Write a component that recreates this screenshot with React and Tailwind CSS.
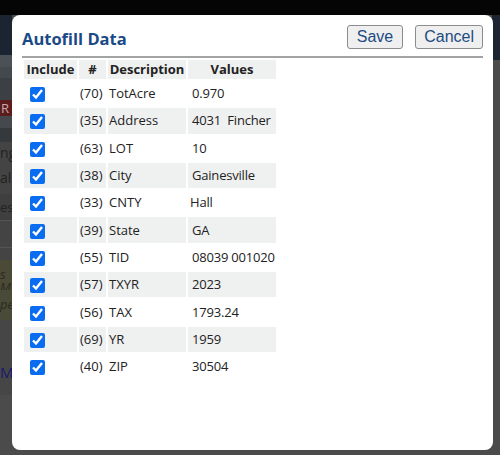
const rows = [
  { n: 70, desc: 'TotAcre', val: '0.970' },
  { n: 35, desc: 'Address', val: '4031\u00a0 Fincher' },
  { n: 63, desc: 'LOT', val: '10' },
  { n: 38, desc: 'City', val: 'Gainesville' },
  { n: 33, desc: 'CNTY', val: 'Hall', tight: true },
  { n: 39, desc: 'State', val: 'GA' },
  { n: 55, desc: 'TID', val: '08039 001020' },
  { n: 57, desc: 'TXYR', val: '2023' },
  { n: 56, desc: 'TAX', val: '1793.24' },
  { n: 69, desc: 'YR', val: '1959' },
  { n: 40, desc: 'ZIP', val: '30504' },
]

function Backdrop() {
  return (
    <div className="flex h-full w-[12px] flex-col">
      <div className="h-[15px] bg-[#050505]" />
      <div className="h-[40px] bg-[#1b2531]" />
      <div className="h-[12px] bg-[#4c5157]" />
      <div className="h-[11px] bg-[#44494e]" />
      <div className="h-[22px] bg-[#3c4044]" />
      <div className="flex h-[16px] items-center bg-[#5b1c1c] pl-[1px] text-[13px] leading-none text-[#c9a9a9]">R</div>
      <div className="h-[12px] bg-[#45494d]" />
      <div className="h-[14px] bg-[#35393c]" />
      <div className="h-[26px] bg-[#444] pt-[4px] text-[14px] leading-none text-[#222]">ng</div>
      <div className="h-[26px] bg-[#444] pt-[3px] text-[14px] leading-none text-[#222]">al</div>
      <div className="h-[26px] bg-[#3f3f3f] pt-[7px] text-[13px] leading-none text-[#222]">es</div>
      <div className="h-[28px] border-y border-[#555] bg-[#444]" />
      <div className="h-[12px] bg-[#444]" />
      <div className="h-[30px] bg-[#4a4a36] pt-[8px] text-[13px] italic leading-none text-[#2a2a1f]">s M</div>
      <div className="h-[30px] bg-[#4a4a38] pt-[8px] text-[13px] italic leading-none text-[#2a2a1f]">pe</div>
      <div className="h-[45px] bg-[#464646]" />
      <div className="h-[30px] bg-[#464646] text-[15px] leading-none text-[#1a1a6a]">M</div>
      <div className="flex-1 bg-[#4b4b4b]" />
    </div>
  )
}

export default function App() {
  return (
    <div className="relative h-[455px] w-[500px] overflow-hidden bg-[#4b4b4b] font-['Open_Sans',sans-serif]">
      <div className="absolute inset-x-0 top-0 h-[15px] bg-[#050505]" />
      <div className="absolute right-0 top-[15px] h-[45px] w-[8px] bg-[#1b2531]" />
      <Backdrop />

      <div className="absolute left-[12px] top-[15px] h-[435px] w-[481px] rounded-[8px] bg-white px-[10px] pt-[10px]">
        <div className="flex h-[31px] items-start justify-between">
          <h2 className="pt-[6px] text-[16.5px] font-bold leading-none text-[#1a4a86]">Autofill Data</h2>
          <div className="flex gap-[12px] font-['Liberation_Sans',Arial,sans-serif]">
            <button type="button" className="h-[24px] rounded-[3px] border border-[#8c8c8c] bg-[#efefef] px-[9px] text-[16px] leading-none text-[#1c4b82]">
              Save
            </button>
            <button type="button" className="h-[24px] rounded-[3px] border border-[#8c8c8c] bg-[#efefef] px-[8px] text-[16px] leading-none text-[#1c4b82]">
              Cancel
            </button>
          </div>
        </div>
        <div className="h-[2px] bg-[#a3a3a3]" />

        <table className="table-fixed border-separate border-spacing-[2px] text-[13px] text-[#222]">
          <thead>
            <tr className="h-[19px] font-bold">
              <th className="w-[53px] bg-[#eff0f0] p-0 text-center leading-none">Include</th>
              <th className="w-[27px] bg-[#eff0f0] p-0 text-center leading-none">#</th>
              <th className="w-[78px] bg-[#eff0f0] p-0 text-center leading-none">Description</th>
              <th className="w-[88px] bg-[#eff0f0] p-0 text-center leading-none">Values</th>
            </tr>
          </thead>
          <tbody>
            {rows.map((r, i) => {
              const bg = i % 2 === 1 ? 'bg-[#eff0f0]' : 'bg-white'
              return (
                <tr key={r.n} className="h-[25.3px]">
                  <td className={`${bg} p-0 align-middle`}>
                    <input
                      type="checkbox"
                      checked
                      readOnly
                      className="ml-[6px] mt-[2px] block h-[15px] w-[15px] accent-[#0a6cf0]"
                    />
                  </td>
                  <td className={`${bg} whitespace-nowrap p-0 pl-[1px] align-middle leading-none`}>({r.n})</td>
                  <td className={`${bg} whitespace-nowrap p-0 pl-[1px] align-middle leading-none`}>{r.desc}</td>
                  <td className={`${bg} whitespace-nowrap p-0 align-middle leading-none tracking-[-0.2px] ${r.tight ? 'pl-[2px]' : 'pl-[4px]'}`}>{r.val}</td>
                </tr>
              )
            })}
          </tbody>
        </table>
      </div>
    </div>
  )
}
